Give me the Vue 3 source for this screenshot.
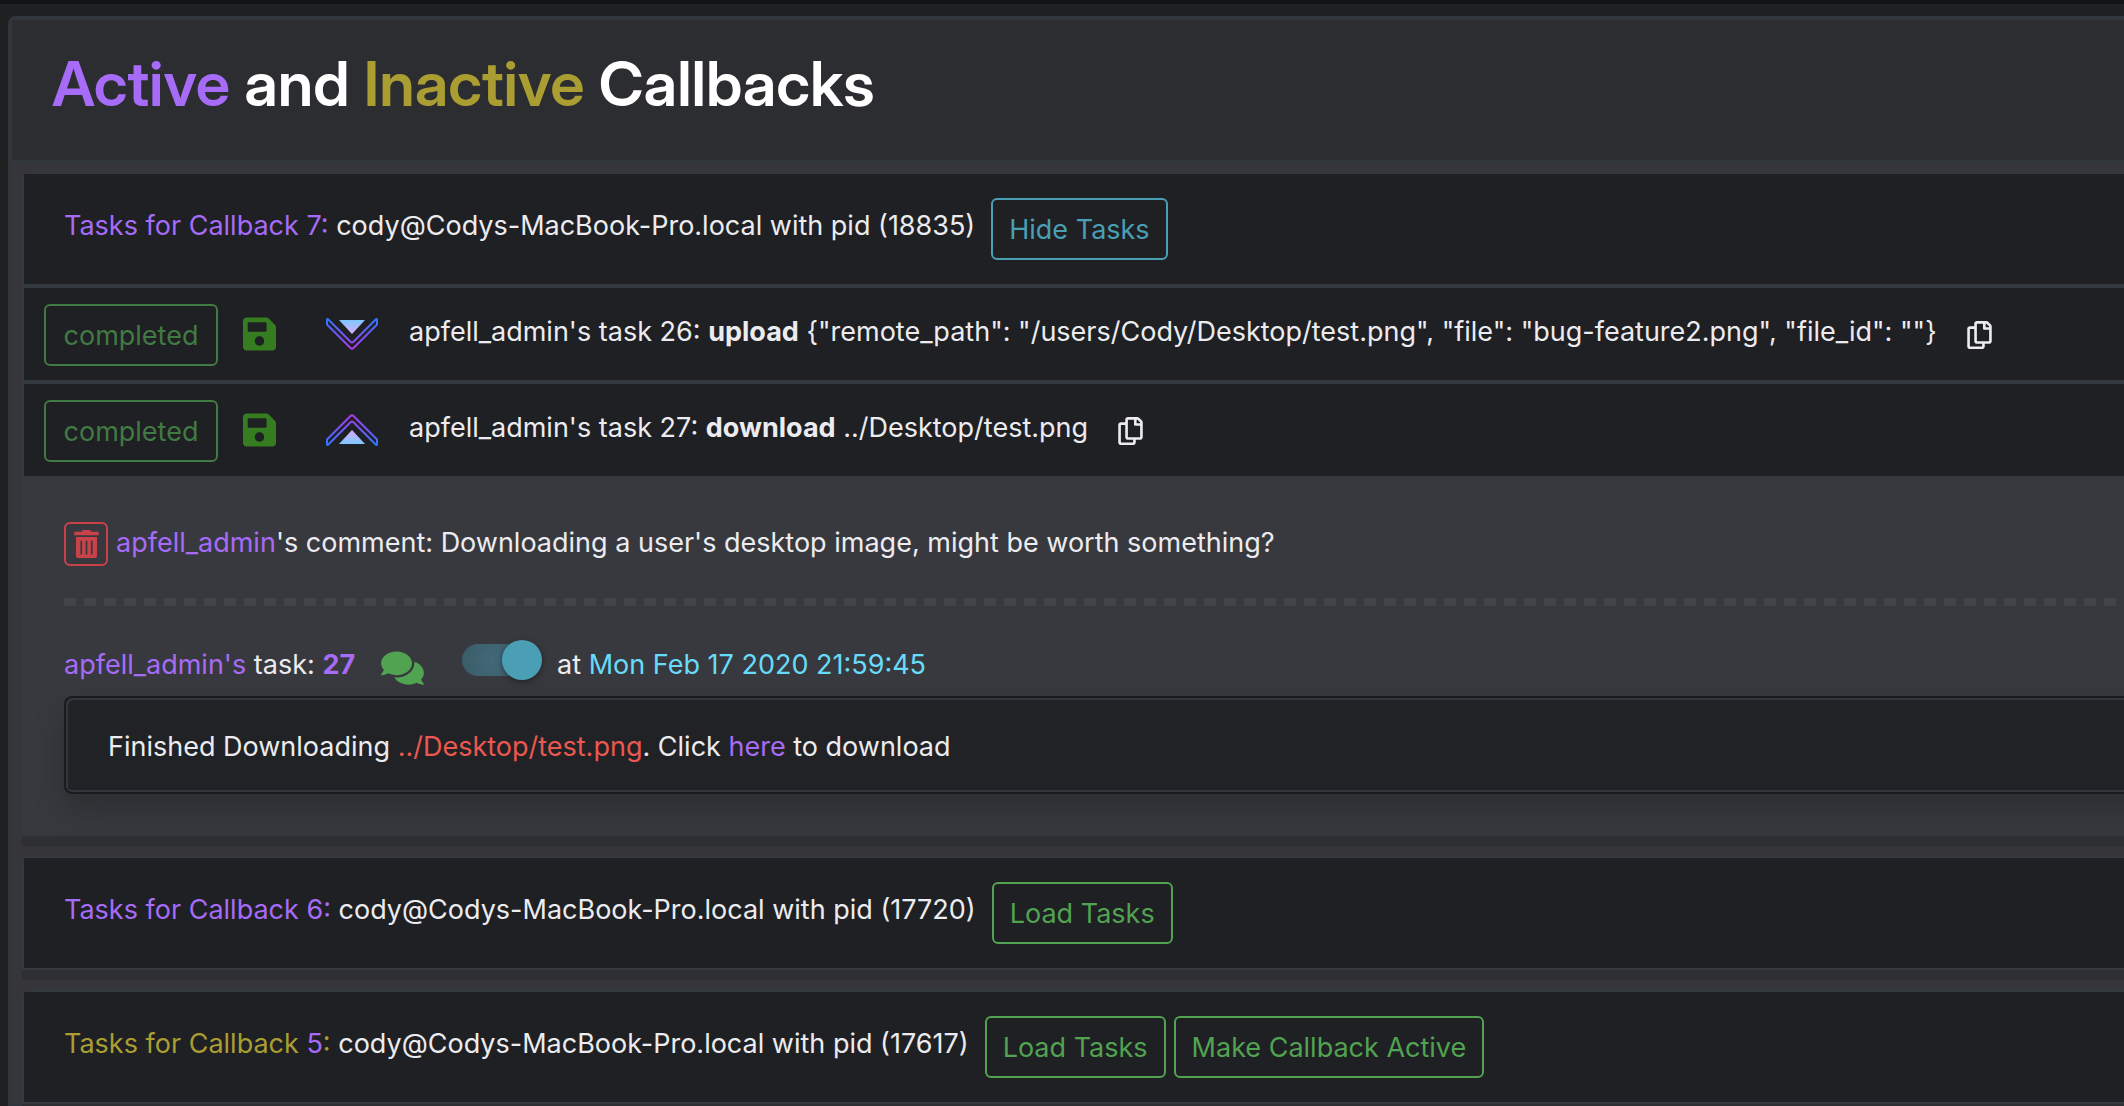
<script setup>
const saveIcon =
  'M433.941 129.941l-83.882-83.882A48 48 0 0 0 316.118 32H48C21.49 32 0 53.49 0 80v352c0 26.51 21.49 48 48 48h352c26.51 0 48-21.49 48-48V163.882a48 48 0 0 0-14.059-33.941zM224 416c-35.346 0-64-28.654-64-64 0-35.346 28.654-64 64-64s64 28.654 64 64c0 35.346-28.654 64-64 64zm96-304.52V212c0 6.627-5.373 12-12 12H76c-6.627 0-12-5.373-12-12V108c0-6.627 5.373-12 12-12h228.52c3.183 0 6.235 1.264 8.485 3.515l3.48 3.48A11.996 11.996 0 0 1 320 111.48z'
const copyIcon =
  'M433.941 65.941l-51.882-51.882A48 48 0 0 0 348.118 0H176c-26.51 0-48 21.49-48 48v48H48c-26.51 0-48 21.49-48 48v320c0 26.51 21.49 48 48 48h224c26.51 0 48-21.49 48-48v-48h80c26.51 0 48-21.49 48-48V99.882a48 48 0 0 0-14.059-33.941zM266 464H54a6 6 0 0 1-6-6V150a6 6 0 0 1 6-6h74v224c0 26.51 21.49 48 48 48h96v42a6 6 0 0 1-6 6zm128-96H182a6 6 0 0 1-6-6V54a6 6 0 0 1 6-6h106v88c0 13.255 10.745 24 24 24h88v202a6 6 0 0 1-6 6zm6-256h-64V48h9.632c1.591 0 3.117.632 4.243 1.757l48.368 48.368a6 6 0 0 1 1.757 4.243V112z'
const trashIcon =
  'M32 464a48 48 0 0 0 48 48h288a48 48 0 0 0 48-48V128H32zm272-256a16 16 0 0 1 32 0v224a16 16 0 0 1-32 0zm-96 0a16 16 0 0 1 32 0v224a16 16 0 0 1-32 0zm-96 0a16 16 0 0 1 32 0v224a16 16 0 0 1-32 0zM432 32H312l-9.4-18.7A24 24 0 0 0 281.1 0H166.800a23.720 23.720 0 0 0-21.400 13.300L136 32H16A16 16 0 0 0 0 48v32a16 16 0 0 0 16 16h416a16 16 0 0 0 16-16V48a16 16 0 0 0-16-16z'
const commentsIcon =
  'M416 192c0-88.400-93.100-160-208-160S0 103.600 0 192c0 34.300 14.100 65.900 38 92-13.400 30.200-35.500 54.200-35.800 54.500-2.200 2.300-2.800 5.700-1.500 8.700S4.800 352 8 352c36.600 0 66.900-12.300 88.700-25 32.200 15.700 70.300 25 111.300 25 114.900 0 208-71.600 208-160zm122 220c23.900-26 38-57.700 38-92 0-66.900-53.500-124.200-129.300-148.100.9 6.600 1.300 13.300 1.300 20.100 0 105.900-107.700 192-240 192-10.800 0-21.300-.8-31.700-1.900C207.800 439.600 281.800 480 368 480c41 0 79.100-9.200 111.300-25 21.800 12.700 52.100 25 88.700 25 3.200 0 6.100-1.900 7.300-4.800 1.300-2.900.7-6.300-1.500-8.700-.3-.3-22.400-24.200-35.800-54.500z'

const tasks = [
  { id: 26, command: 'upload', params: '{"remote_path": "/users/Cody/Desktop/test.png", "file": "bug-feature2.png", "file_id": ""}', open: false },
  { id: 27, command: 'download', params: '../Desktop/test.png', open: true },
]
</script>

<template>
  <main class="page">
    <section class="panel">
      <header class="panel-head">
        <h1><span class="active">Active</span> and <span class="inactive">Inactive</span> Callbacks</h1>
      </header>

      <article class="callback">
        <div class="callback-row">
          <p class="label"><span class="active">Tasks for Callback 7:</span> cody@Codys-MacBook-Pro.local with pid (18835)</p>
          <button type="button" class="btn info">Hide Tasks</button>
        </div>

        <div v-for="task in tasks" :key="task.id" class="task-row">
          <button type="button" class="btn done">completed</button>
          <button type="button" class="icon-btn save" aria-label="Save task">
            <svg width="33" height="38" viewBox="0 0 448 512"><path :d="saveIcon" fill="#367c21" /></svg>
          </button>
          <button type="button" class="icon-btn chevron" :aria-label="task.open ? 'Collapse task' : 'Expand task'">
            <svg width="52" height="32" viewBox="0 0 52 32" :class="{ flipped: task.open }">
              <defs>
                <linearGradient :id="'edge' + task.id" gradientUnits="userSpaceOnUse" x1="0" y1="0" x2="0" y2="32">
                  <stop offset="0" stop-color="#2a78ff" />
                  <stop offset="1" stop-color="#b436ee" />
                </linearGradient>
                <linearGradient :id="'fill' + task.id" x1="0" y1="0" x2="0" y2="1">
                  <stop offset="0" stop-color="#7cc8ff" />
                  <stop offset="1" stop-color="#dcaaf8" />
                </linearGradient>
              </defs>
              <path
                d="M1 1.800Q1 .3 2.300 1.500L24.500 23.800Q26 25.200 27.500 23.800L49.700 1.500Q51 .3 51 1.800V6.500L27.500 30Q26 31.600 24.500 30L1 6.500Z"
                fill="none"
                :stroke="`url(#edge${task.id})`"
                stroke-width="2"
                stroke-linejoin="round"
              />
              <path d="M13 2H39L26 16Z" :fill="`url(#fill${task.id})`" />
            </svg>
          </button>
          <p class="label">apfell_admin's task {{ task.id }}: <b>{{ task.command }}</b> {{ task.params }}</p>
          <button type="button" class="icon-btn copy" aria-label="Copy parameters">
            <svg width="25" height="28" viewBox="0 0 448 512"><path :d="copyIcon" fill="#ececf0" /></svg>
          </button>
        </div>

        <div class="details">
          <div class="comment">
            <button type="button" class="trash" aria-label="Delete comment">
              <svg width="25" height="28" viewBox="0 0 448 512"><path :d="trashIcon" fill="#c9424a" /></svg>
            </button>
            <p><span class="active">apfell_admin</span>'s comment: Downloading a user's desktop image, might be worth something?</p>
          </div>
          <div class="divider"></div>
          <div class="task-meta">
            <p><span class="active">apfell_admin's</span> task: <b class="active">27</b></p>
            <button type="button" class="icon-btn chat" aria-label="Comments">
              <svg width="43" height="38" viewBox="0 0 576 512"><path :d="commentsIcon" fill="#51a351" /></svg>
            </button>
            <input type="checkbox" class="switch" checked aria-label="Toggle output" />
            <p>at <time class="time">Mon Feb 17 2020 21:59:45</time></p>
          </div>
          <div class="output">
            <p>Finished Downloading <span class="path">../Desktop/test.png</span>. Click <a href="#" class="active">here</a> to download</p>
          </div>
        </div>
      </article>

      <article class="callback">
        <div class="callback-row">
          <p class="label"><span class="active">Tasks for Callback 6:</span> cody@Codys-MacBook-Pro.local with pid (17720)</p>
          <button type="button" class="btn success">Load Tasks</button>
        </div>
      </article>

      <article class="callback">
        <div class="callback-row">
          <p class="label"><span class="inactive">Tasks for Callback <span class="active">5</span>:</span> cody@Codys-MacBook-Pro.local with pid (17617)</p>
          <button type="button" class="btn success">Load Tasks</button>
          <button type="button" class="btn success">Make Callback Active</button>
        </div>
      </article>
    </section>
  </main>
</template>

<style>
body {
  margin: 0;
  background: #1f2022;
  overflow: hidden;
}
</style>

<style scoped>
* {
  box-sizing: border-box;
}

.page {
  height: 100vh;
  overflow: hidden;
  padding: 12px 0 0 8px;
  border-top: 4px solid #121316;
  background: #1f2022;
  color: #ececf0;
  font: 400 27px/42px Inter, "Liberation Sans", sans-serif;
}

p,
h1 {
  margin: 0;
  white-space: nowrap;
}

button {
  font: inherit;
  background: none;
  cursor: pointer;
}

svg {
  display: block;
}

.active {
  color: #a66bf7;
}

.inactive {
  color: #aa9d32;
}

.panel {
  border: 4px solid #31363c;
  border-right: 0;
  border-top-left-radius: 8px;
  background: #35353a;
}

.panel-head {
  height: 142px;
  padding: 26px 40px;
  border-bottom: 2px solid #33383d;
  background: #2c2d30;
}

h1 {
  color: #fff;
  font-family: "Inter Display", Inter, "Liberation Sans", sans-serif;
  font-size: 62px;
  font-weight: 600;
  line-height: 76px;
}

.callback {
  margin: 10px 0 0 10px;
  border: 2px solid #343940;
  border-right: 0;
  border-top-left-radius: 6px;
  box-shadow: 0 10px 0 #2e2f32;
}

.callback + .callback {
  margin-top: 20px;
}

.callback-row {
  display: flex;
  align-items: center;
  gap: 8px;
  height: 110px;
  padding-left: 40px;
  background: #1f2023;
}

.callback-row .label {
  margin-right: 8px;
}

.label {
  padding-bottom: 6px;
}

.btn {
  height: 62px;
  padding: 2px 16px 0;
  border: 2px solid;
  border-radius: 6px;
  white-space: nowrap;
}

.info {
  color: #4a9fb5;
}

.success {
  color: #51a351;
}

.done {
  width: 174px;
  color: #417a43;
}

.task-row {
  display: flex;
  align-items: center;
  height: 96px;
  padding: 2px 0 0 20px;
  border-top: 4px solid #343940;
  background: #1f2023;
}

.icon-btn {
  flex: none;
  padding: 0;
  border: 0;
}

.save {
  margin-left: 25px;
  padding-bottom: 2px;
}

.chevron {
  margin: 0 31px 0 50px;
  padding-bottom: 2px;
}

.flipped {
  transform: scaleY(-1);
}

.copy {
  margin-left: 30px;
}

.details {
  padding: 46px 0 40px 40px;
  background: #38393e;
}

.comment {
  display: flex;
  align-items: center;
  gap: 8px;
  height: 44px;
}

.trash {
  display: grid;
  place-items: center;
  width: 44px;
  height: 44px;
  padding: 0;
  border: 2px solid #c9424a;
  border-radius: 6px;
}

.comment p {
  padding-bottom: 2px;
}

.divider {
  height: 8px;
  margin: 32px 8px 34px 0;
  background: repeating-linear-gradient(90deg, #434449 0 12px, transparent 12px 20px);
}

.task-meta {
  display: flex;
  align-items: center;
  height: 40px;
}

.task-meta p {
  padding-top: 10px;
}

.chat {
  margin: 16px 38px 0 26px;
}

.switch {
  appearance: none;
  position: relative;
  width: 80px;
  height: 40px;
  margin: 0 15px 0 0;
}

.switch::before {
  content: "";
  position: absolute;
  inset: 4px 8px 4px 0;
  border-radius: 16px;
  background: radial-gradient(circle at 32px 16px, #42697a, #395a63 40px);
}

.switch::after {
  content: "";
  position: absolute;
  inset: 0 0 0 40px;
  border-radius: 50%;
  background: #4a9fb5;
  box-shadow: 0 2px 6px #00000066;
}

.time {
  color: #67dcfa;
}

.output {
  height: 98px;
  margin: 16px -40px 0 0;
  padding: 28px 42px 0;
  border: 2px solid #1a1b1d;
  border-right: 0;
  border-radius: 8px 0 0 8px;
  background: #212225;
  box-shadow: inset 2px 2px #31363c, inset 0 -2px #31363c, 0 16px 32px #00000033;
}

.path {
  color: #ea5850;
}

a {
  text-decoration: none;
}
</style>
